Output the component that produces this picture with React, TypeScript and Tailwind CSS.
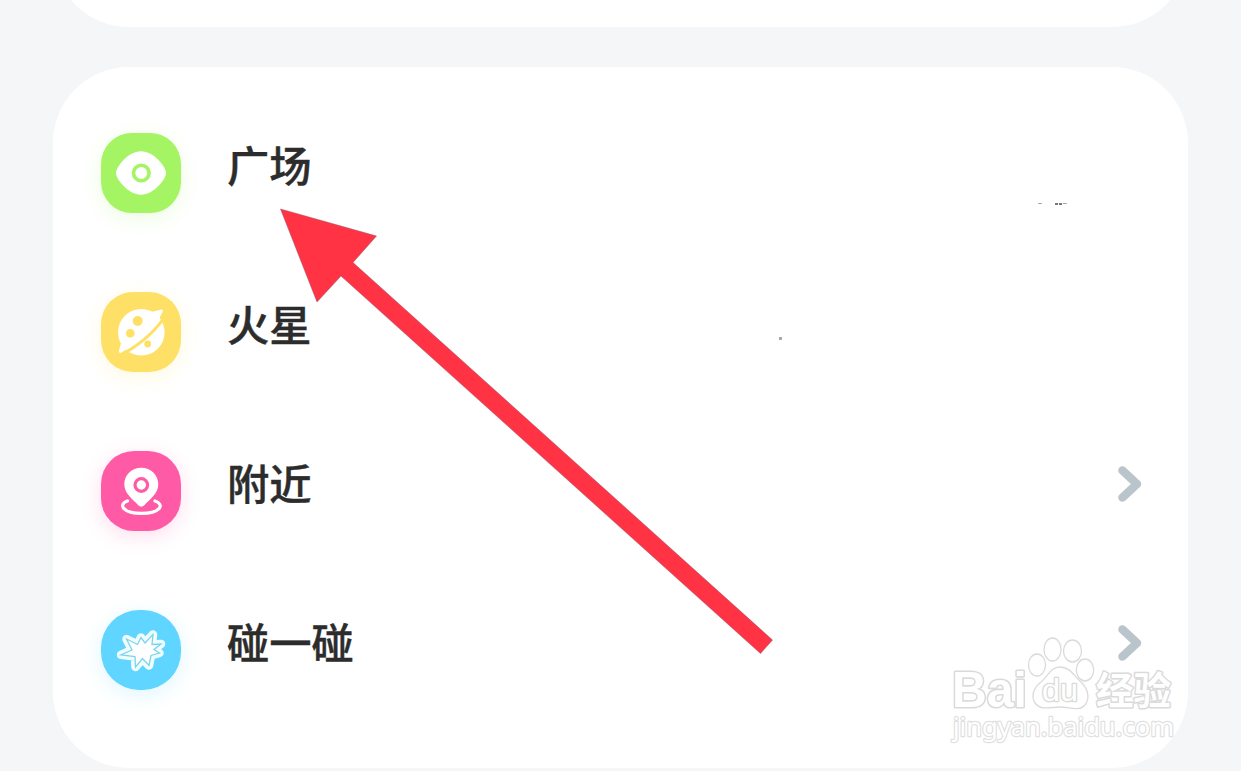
import React from "react";

type Row = { label: string; box: string; chevron: boolean; icon: React.ReactNode };

const STAR =
  "M25.5 29L36.5 34.5L40 27.5L44 33L52 24.5L51 34.5L60 34L53 39.5L58.5 43L50 45.5L48 55.5L41.5 48.5L34.5 57L34 46.5L20 44.8L31 40Z";

const eye = (
  <>
    <path d="M15 40C15 34 27 18.3 40 18.3S65 34 65 40S53 61.7 40 61.7S15 46 15 40Z" fill="#fff" />
    <circle cx="40.3" cy="40" r="7.8" fill="#fff" stroke="#a4f463" strokeWidth="3.6" />
  </>
);
const planet = (
  <>
    <circle cx="40.3" cy="40.3" r="23.3" fill="#fff" />
    <path d="M48 20.5L60.5 17.5Q62.5 17.5 61.5 20Q51 43 20 60.8Q17.5 61.5 18 58.5L21 48Z" fill="#fff" />
    <path d="M66.5 20.5Q51.5 45.5 22 61.8" fill="none" stroke="#ffe066" strokeWidth="3" />
    <circle cx="36.7" cy="29" r="5" fill="#ffe066" />
    <circle cx="29.3" cy="41.2" r="4.3" fill="#ffe066" />
    <circle cx="46.7" cy="52" r="3.4" fill="#ffe066" />
  </>
);
const pin = (
  <>
    <path d="M26.5 50C21.5 51.5 20.5 55 23 57.7C29 64 52 64 58 57.7C60.5 55 59 51.5 54 50" fill="none" stroke="#fff" strokeWidth="3.2" strokeLinecap="round" />
    <path d="M40.3 16.7C30.8 16.7 23.3 24 23.3 33.2C23.3 43 32 48 37 54Q40.3 57.5 43.6 54C48.6 48 57.3 43 57.3 33.2C57.3 24 49.8 16.7 40.3 16.7Z" fill="#fff" />
    <circle cx="40.3" cy="34" r="6.3" fill="#fff" stroke="#ff5aa5" strokeWidth="3.2" />
  </>
);
const burst = (
  <>
    <path d={STAR} fill="#fff" stroke="#f0fdff" strokeWidth="8.5" strokeLinejoin="round" />
    <path d={STAR} fill="#fff" stroke="#7cd3ee" strokeWidth="1.3" />
  </>
);

const rows: Row[] = [
  { label: "广场", box: "rounded-[31px] bg-[#a4f463] shadow-[0_5px_20px_#a4f46333]", chevron: false, icon: eye },
  { label: "火星", box: "rounded-[32px] bg-[#ffe066] shadow-[0_5px_20px_#ffe06633]", chevron: false, icon: planet },
  { label: "附近", box: "rounded-[33px] bg-[#ff5aa5] shadow-[0_5px_20px_#ff5aa533]", chevron: true, icon: pin },
  { label: "碰一碰", box: "rounded-[38px] bg-[#5fd5ff] shadow-[0_5px_20px_#5fd5ff33]", chevron: true, icon: burst },
];

function Watermark() {
  return (
    <svg className="absolute top-[630px] left-[940px] overflow-visible" width="245" height="125" viewBox="940 630 245 125" fill="#fff" stroke="#dadada" strokeWidth="1.3" strokeLinejoin="round">
      <text x="952" y="707" fontFamily="Liberation Sans, sans-serif" fontWeight="700" fontSize="50" strokeWidth="3.2" paintOrder="stroke" textLength="75" lengthAdjust="spacingAndGlyphs">Bai</text>
      <ellipse cx="1037" cy="665" rx="8.5" ry="11" />
      <ellipse cx="1052.5" cy="649.5" rx="8.5" ry="11.5" />
      <ellipse cx="1072.5" cy="651" rx="9" ry="11" />
      <ellipse cx="1085" cy="670" rx="8.7" ry="11" />
      <path d="M1060 667C1051 667 1048 676 1041 682C1033 688 1031 697 1035 703C1041 711 1051 707 1060 707C1070 707 1079 712 1085 705C1091 697 1087 688 1081 682C1074 676 1070 667 1060 667Z" />
      <text x="1042" y="701" fontFamily="Liberation Sans, sans-serif" fontWeight="400" fontSize="31" strokeWidth="2.6" paintOrder="stroke" textLength="36" lengthAdjust="spacingAndGlyphs">du</text>
      <text x="1096" y="704" fontFamily="Noto Sans CJK SC, sans-serif" fontWeight="700" fontSize="38" strokeWidth="3" paintOrder="stroke" textLength="75" lengthAdjust="spacingAndGlyphs">经验</text>
      <text x="953" y="736" fontFamily="Noto Sans, sans-serif" fontWeight="400" fontSize="26" stroke="#e0e0e0" strokeWidth="2.4" paintOrder="stroke" textLength="221" lengthAdjust="spacingAndGlyphs">jingyan.baidu.com</text>
    </svg>
  );
}

export default function App() {
  return (
    <main className="relative flex h-[771px] w-[1241px] flex-col gap-10 overflow-hidden bg-[#f4f6f8] px-[53px] font-['Noto_Sans_CJK_SC',sans-serif]">
      <div className="flex h-[27px] shrink-0 flex-col justify-end overflow-hidden">
        <div className="h-[180px] shrink-0 rounded-[76px] bg-white" />
      </div>
      <section className="h-[701px] shrink-0 rounded-[76px] bg-white pt-[26px] pr-[44px] pl-[48px]">
        {rows.map((r) => (
          <div key={r.label} className="flex h-[159px] items-center">
            <div className={"h-20 w-20 shrink-0 " + r.box}>
              <svg width="80" height="80" viewBox="0 0 80 80">{r.icon}</svg>
            </div>
            <span className="mb-[17px] ml-[46px] flex-1 text-[42.3px] leading-[60px] font-medium text-[#2c2c2c] [-webkit-text-stroke:0.4px_#2c2c2c]">{r.label}</span>
            {r.chevron && (
              <svg className="mb-[14px]" width="28" height="38" viewBox="0 0 28 38" fill="none" stroke="#bac4cb" strokeWidth="8.5" strokeLinecap="round" strokeLinejoin="round">
                <path d="M6.5 5.5L21 19L6.5 32.5" />
              </svg>
            )}
          </div>
        ))}
      </section>
      <svg className="absolute top-0 left-0" width="1241" height="771" viewBox="0 0 1241 771">
        <path d="M280.5 209L376.5 236L353 262.5L772.5 640L760.5 653.5L341 276L317 302Z" fill="#ff3344" stroke="#99536b" strokeWidth="0.5" />
        <path d="M1038 203.5h4M1063 203.5h4" stroke="#aaa" />
        <path d="M1055 204h8" stroke="#777" strokeWidth="2" strokeDasharray="3 1" />
        <rect x="779" y="337" width="3" height="3" fill="#aaa" />
      </svg>
      <Watermark />
    </main>
  );
}
